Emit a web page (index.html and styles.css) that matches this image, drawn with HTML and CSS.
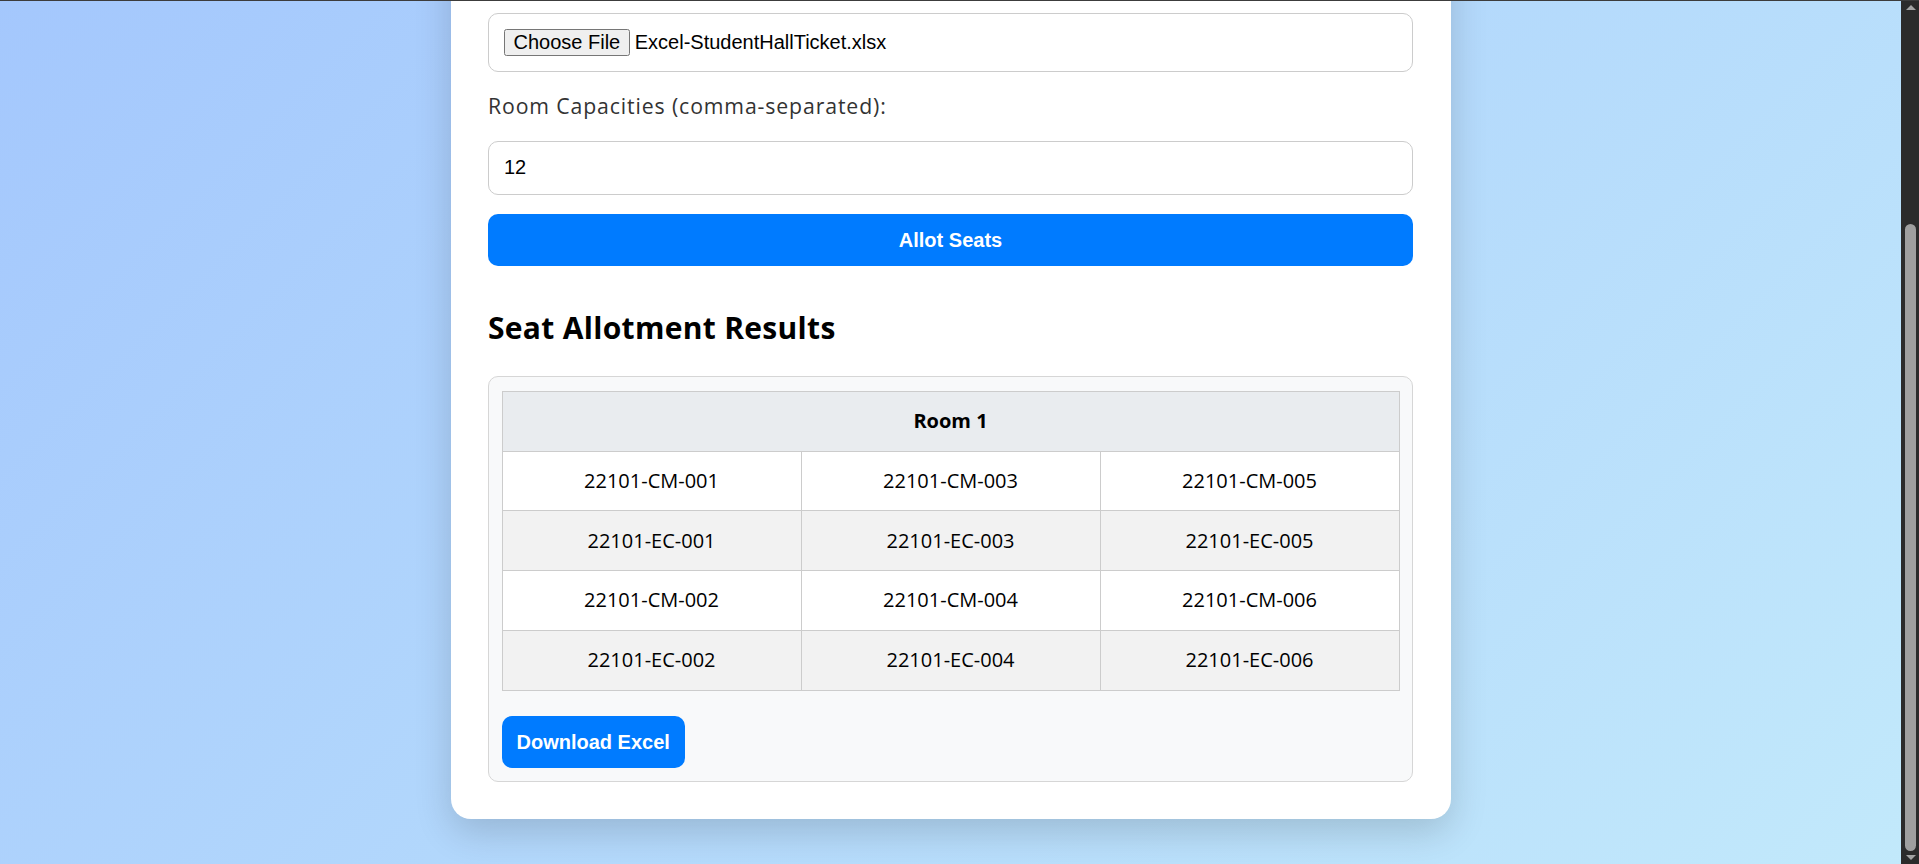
FILE: index.html
```html
<!DOCTYPE html>
<html lang="en">
<head>
<meta charset="utf-8">
<title>Exam Seat Allotment</title>
<link rel="stylesheet" href="styles.css">
</head>
<body>
<div class="top-edge"></div>
<div class="scrollbar" aria-hidden="true">
  <span class="sb-arrow sb-up"></span>
  <span class="sb-thumb"></span>
  <span class="sb-arrow sb-down"></span>
</div>
<div class="page">
  <main class="card">
    <h1 class="title">Exam Seat Allotment System</h1>
    <p class="intro">Upload the student list and enter room capacities to generate the seating plan.</p>
    <label class="field-label">Upload Student Excel File:</label>
    <div class="file-box">
      <button type="button" class="file-btn">Choose File</button>
      <span class="file-name">Excel-StudentHallTicket.xlsx</span>
    </div>
    <label class="field-label" for="cap">Room Capacities (comma-separated):</label>
    <input id="cap" class="text-input" type="text" value="12">
    <button type="button" class="primary-btn">Allot Seats</button>

    <h2 class="results-title">Seat Allotment Results</h2>
    <section class="results">
      <table class="room-table">
        <thead>
          <tr><th colspan="3">Room 1</th></tr>
        </thead>
        <tbody>
          <tr><td>22101-CM-001</td><td>22101-CM-003</td><td>22101-CM-005</td></tr>
          <tr><td>22101-EC-001</td><td>22101-EC-003</td><td>22101-EC-005</td></tr>
          <tr><td>22101-CM-002</td><td>22101-CM-004</td><td>22101-CM-006</td></tr>
          <tr><td>22101-EC-002</td><td>22101-EC-004</td><td>22101-EC-006</td></tr>
        </tbody>
      </table>
      <button type="button" class="download-btn">Download Excel</button>
    </section>
  </main>
</div>
<script src="script.js"></script>
</body>
</html>
```

FILE: styles.css
```css
html {
  color-scheme: light;
}

body {
  margin: 0;
  padding-right: 18px;
  background: linear-gradient(135deg, #a1c4fd 0%, #c2e9fb 100%);
  font-family: "Open Sans", "Noto Sans", sans-serif;
  color: #000;
}

.top-edge {
  position: fixed;
  top: 0;
  left: 0;
  right: 0;
  height: 1px;
  background: #3c3c3c;
  z-index: 10;
}

/* browser (dark) scrollbar drawn over the right edge */
.scrollbar {
  position: fixed;
  top: 0;
  right: 0;
  bottom: 0;
  width: 18px;
  background: #2b2b2b;
  z-index: 9;
}

.sb-thumb {
  position: absolute;
  left: 4px;
  width: 11px;
  top: 224px;
  bottom: 13px;
  border-radius: 6px;
  background: #9f9f9f;
}

.sb-arrow {
  position: absolute;
  left: 5px;
  width: 0;
  height: 0;
  border-left: 5px solid transparent;
  border-right: 5px solid transparent;
}

.sb-up {
  top: 5px;
  border-bottom: 5px solid #a3a3a3;
}

.sb-down {
  bottom: 4px;
  border-top: 5px solid #a3a3a3;
}

.page {
  zoom: 1.25;
  padding: 36px 20px;
}

.card {
  box-sizing: border-box;
  max-width: 800px;
  margin: 0 auto;
  padding: 30px;
  background: #fff;
  border-radius: 16px;
  box-shadow: 0 10px 30px rgba(0, 0, 0, 0.16);
}

.title {
  margin: 0 0 30px;
  font-size: 28px;
  line-height: 48px;
  font-weight: 700;
  text-align: center;
  color: #222;
}

.intro {
  margin: 0 0 30px;
  font-size: 16px;
  line-height: 24px;
  text-align: center;
  color: #555;
}

.field-label {
  display: block;
  margin: 15px 0 16px;
  font-size: 17px;
  line-height: 24px;
  letter-spacing: 0.7px;
  color: #333;
}

.file-box {
  display: flex;
  align-items: baseline;
  gap: 4px;
  padding: 12px;
  border: 1px solid #ccc;
  border-radius: 8px;
  background: #fff;
}

.file-btn {
  font: 16px/17px "Liberation Sans", Arial, sans-serif;
  color: #000;
  padding: 1px 6px;
  margin: 0;
}

.file-name {
  font: 16px/17px "Liberation Sans", Arial, sans-serif;
  color: #000;
}

.text-input {
  display: block;
  box-sizing: border-box;
  width: 100%;
  height: 43px;
  margin: 0 0 15px;
  padding: 0 12px;
  border: 1px solid #ccc;
  border-radius: 8px;
  background: #fff;
  color: #000;
  font: 16px "Liberation Sans", Arial, sans-serif;
  outline: none;
}

.primary-btn {
  display: block;
  width: 100%;
  padding: 12px;
  border: 0;
  border-radius: 8px;
  background: #007bff;
  color: #fff;
  font: bold 16px/18px "Liberation Sans", Arial, sans-serif;
}

.results-title {
  margin: 31px 0 21px;
  font-size: 24px;
  line-height: 36px;
  font-weight: 700;
  letter-spacing: 0.25px;
  color: #000;
}

.results {
  padding: 11px 10px 10px;
  border: 1px solid #d6d6d6;
  border-radius: 8px;
  background: #f8f9fa;
}

.room-table {
  width: 100%;
  border-collapse: collapse;
  table-layout: fixed;
  background: #fff;
}

.room-table th,
.room-table td {
  padding: 11.5px 10px;
  border: 1px solid #ccc;
  font-size: 16px;
  line-height: 24px;
  text-align: center;
  color: #000;
}

.room-table th {
  background: #e9ecef;
  font-weight: 700;
}

.room-table tbody tr:nth-child(even) td {
  background: #f2f2f2;
}

.download-btn {
  display: block;
  margin-top: 20px;
  padding: 12px;
  border: 0;
  border-radius: 8px;
  background: #007bff;
  color: #fff;
  font: bold 16px/18px "Liberation Sans", Arial, sans-serif;
}
```

FILE: script.js
```js
function scrollToBottom() {
  window.scrollTo(0, document.documentElement.scrollHeight);
}
scrollToBottom();
window.addEventListener('load', scrollToBottom);
```
